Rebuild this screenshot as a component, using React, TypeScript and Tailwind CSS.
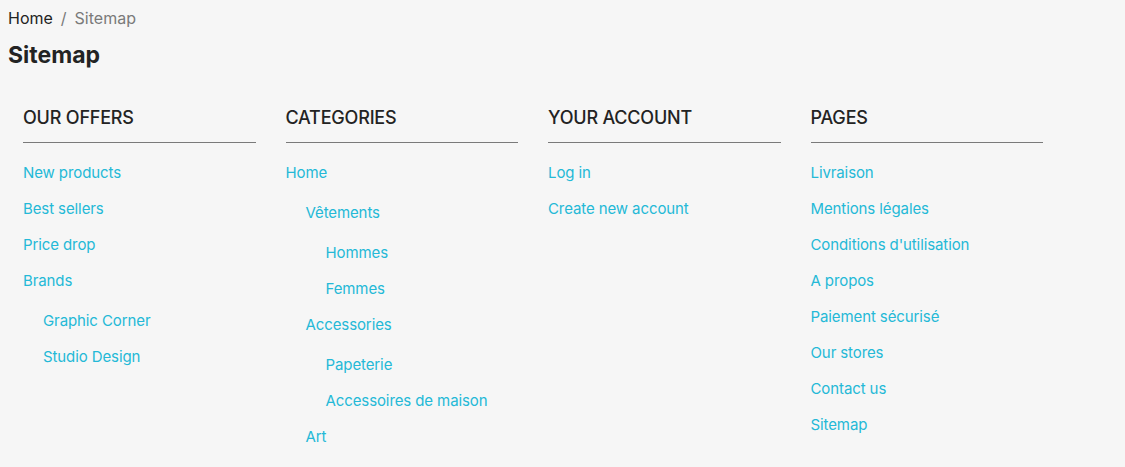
type Item = {
  label: string;
  children?: Item[];
};

type Section = {
  title: string;
  items: Item[];
};

const sections: Section[] = [
  {
    title: "Our Offers",
    items: [
      { label: "New products" },
      { label: "Best sellers" },
      { label: "Price drop" },
      {
        label: "Brands",
        children: [{ label: "Graphic Corner" }, { label: "Studio Design" }],
      },
    ],
  },
  {
    title: "Categories",
    items: [
      {
        label: "Home",
        children: [
          {
            label: "Vêtements",
            children: [{ label: "Hommes" }, { label: "Femmes" }],
          },
          {
            label: "Accessories",
            children: [
              { label: "Papeterie" },
              { label: "Accessoires de maison" },
            ],
          },
          { label: "Art" },
        ],
      },
    ],
  },
  {
    title: "Your Account",
    items: [{ label: "Log in" }, { label: "Create new account" }],
  },
  {
    title: "Pages",
    items: [
      { label: "Livraison" },
      { label: "Mentions légales" },
      { label: "Conditions d'utilisation" },
      { label: "A propos" },
      { label: "Paiement sécurisé" },
      { label: "Our stores" },
      { label: "Contact us" },
      { label: "Sitemap" },
    ],
  },
];

const LinkList = ({ items, nested }: { items: Item[]; nested?: boolean }) => {
  return (
    <ul className={nested ? "pt-[4px] pl-[20px]" : ""}>
      {items.map((item, index) => (
        <li key={index}>
          <a
            href="#"
            className="block mb-[12px] text-[15px] leading-[24px] tracking-[-0.1px] text-[#24b9d7] hover:text-[#208094]"
          >
            {item.label}
          </a>
          {item.children && <LinkList items={item.children} nested />}
        </li>
      ))}
    </ul>
  );
};

const App = () => {
  return (
    <div
      className="min-h-[467px] bg-[#f6f6f6] px-[8px] pt-[6px] text-[#232323]"
      style={{ fontFamily: "Inter, 'Noto Sans', sans-serif" }}
    >
      <nav className="text-[16px] leading-[24px]">
        <a href="#" className="text-[#232323]">
          Home
        </a>
        <span className="mx-[8px] text-[#7a7a7a]">/</span>
        <span className="text-[#7a7a7a]">Sitemap</span>
      </nav>

      <h1 className="mt-[11px] text-[23px] font-bold leading-[28px]">
        Sitemap
      </h1>

      <div className="mt-[35px] grid grid-cols-[repeat(4,262.5px)]">
        {sections.map((section, index) => (
          <div key={index} className="px-[15px]">
            <h2 className="border-b border-[#7a7a7a] pb-[11px] text-[18px] font-medium uppercase leading-[27px] tracking-[-0.2px]">
              {section.title}
            </h2>
            <div className="mt-[18px]">
              <LinkList items={section.items} />
            </div>
          </div>
        ))}
      </div>
    </div>
  );
};

export default App;
